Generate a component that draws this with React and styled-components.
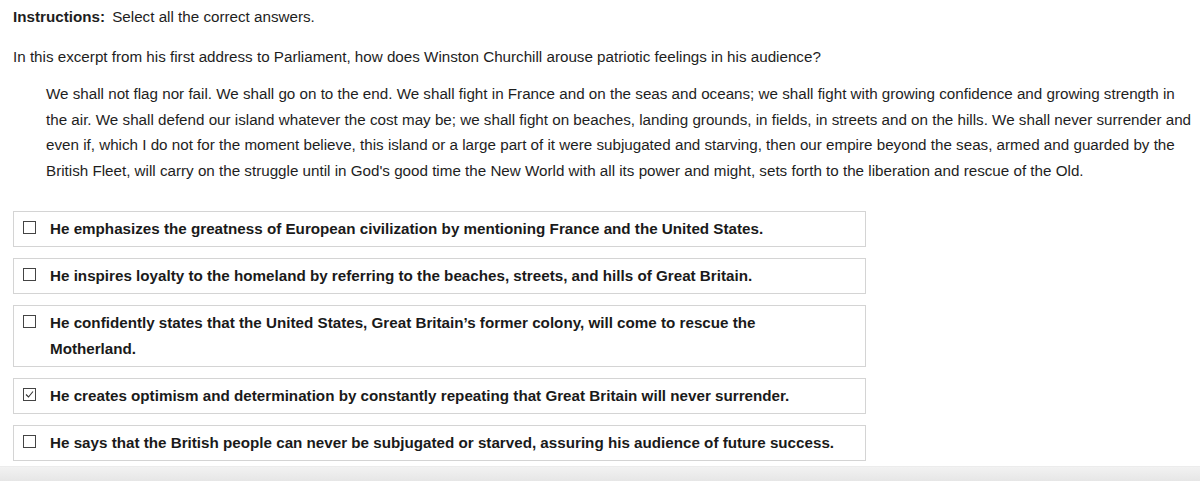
import React from "react";
import styled, { createGlobalStyle } from "styled-components";

const Global = createGlobalStyle`
  html, body { margin: 0; padding: 0; background: #fff; }
  body { font-family: "Liberation Sans", Arial, sans-serif; color: #1e1e1e; }
`;

const Page = styled.div`
  width: 1200px;
  height: 481px;
  display: flex;
  flex-direction: column;
  overflow: hidden;
`;

const Content = styled.div`
  flex: 1;
  padding: 8px 0 0 13px;
`;

const Instructions = styled.div`
  font-size: 15.2px;
  line-height: 18px;
  strong { font-weight: bold; margin-right: 3px; }
`;

const Question = styled.div`
  font-size: 15.2px;
  line-height: 18px;
  margin-top: 22px;
`;

const Excerpt = styled.p`
  margin: 15px 0 0 33px;
  width: 1147px;
  font-size: 15.2px;
  line-height: 25.5px;
`;

const Options = styled.div`
  margin-top: 28px;
  display: flex;
  flex-direction: column;
  gap: 11px;
  width: 853px;
`;

const Option = styled.label`
  display: flex;
  align-items: flex-start;
  border: 1px solid #d4d4d4;
  padding: 4px 10px 4px 9px;
  font-size: 15.2px;
  font-weight: bold;
  line-height: 26px;
  color: #1a1a1a;
`;

const Box = styled.span`
  flex: none;
  width: 11px;
  height: 11px;
  border: 1px solid #444;
  margin: 5px 14px 0 0;
  display: flex;
  align-items: center;
  justify-content: center;
  background: #fff;
`;

const Text = styled.span`
  max-width: 789px;
`;

const Footer = styled.div`
  height: 14px;
  background: linear-gradient(#f2f2f2, #e6e6e6);
  border-top: 1px solid #ececec;
`;

const options = [
  ["He emphasizes the greatness of European civilization by mentioning France and the United States.", false],
  ["He inspires loyalty to the homeland by referring to the beaches, streets, and hills of Great Britain.", false],
  ["He confidently states that the United States, Great Britain\u2019s former colony, will come to rescue the Motherland.", false],
  ["He creates optimism and determination by constantly repeating that Great Britain will never surrender.", true],
  ["He says that the British people can never be subjugated or starved, assuring his audience of future success.", false],
];

const Check = () => (
  <svg width="9" height="9" viewBox="0 0 9 9">
    <path d="M1 4.5 L3.5 7 L8 1.5" fill="none" stroke="#333" strokeWidth="1.1" />
  </svg>
);

export default function App() {
  return (
    <Page>
      <Global />
      <Content>
        <Instructions>
          <strong>Instructions:</strong> Select all the correct answers.
        </Instructions>
        <Question>
          In this excerpt from his first address to Parliament, how does Winston Churchill arouse patriotic feelings in his audience?
        </Question>
        <Excerpt>
          We shall not flag nor fail. We shall go on to the end. We shall fight in France and on the seas and oceans; we shall fight with growing confidence and growing strength in the air. We shall defend our island whatever the cost may be; we shall fight on beaches, landing grounds, in fields, in streets and on the hills. We shall never surrender and even if, which I do not for the moment believe, this island or a large part of it were subjugated and starving, then our empire beyond the seas, armed and guarded by the British Fleet, will carry on the struggle until in God's good time the New World with all its power and might, sets forth to the liberation and rescue of the Old.
        </Excerpt>
        <Options>
          {options.map(([t, c], i) => (
            <Option key={i}>
              <Box>{c && <Check />}</Box>
              <Text>{t}</Text>
            </Option>
          ))}
        </Options>
      </Content>
      <Footer />
    </Page>
  );
}
